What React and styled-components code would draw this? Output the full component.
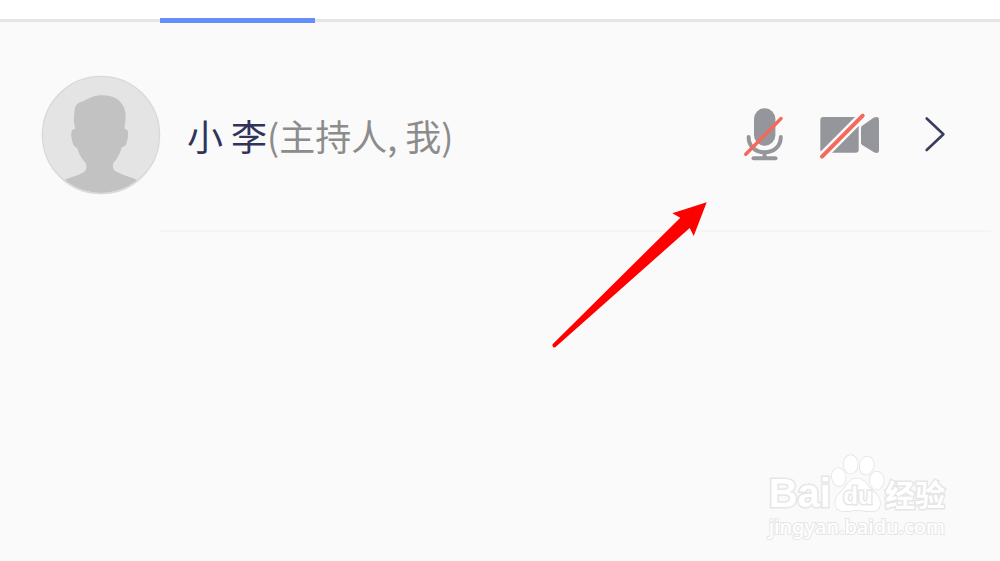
import React from 'react';
import styled, { createGlobalStyle } from 'styled-components';

const GlobalStyle = createGlobalStyle`
  * {
    box-sizing: border-box;
  }
  body {
    margin: 0;
    background: #fafafa;
    font-family: 'Noto Sans CJK SC', 'Noto Sans', sans-serif;
  }
`;

const Page = styled.main`
  position: relative;
  min-height: 100vh;
  background: #fafafa;
`;

const TabBar = styled.nav`
  display: flex;
  align-items: flex-end;
  height: 23px;
  padding-left: 16%;
  background: linear-gradient(#fff 19px, #e5e5e5 19px, #e5e5e5 22px, #fafafa 22px);
`;

const Tab = styled.button`
  width: 155px;
  height: 23px;
  padding: 0;
  border: 0;
  border-bottom: 5px solid #648efb;
  background: transparent;
`;

const MemberList = styled.ul`
  margin: 0;
  padding: 0;
  list-style: none;
`;

const MemberRow = styled.li`
  display: flex;
  align-items: center;
  padding: 52px 54px 35px 41px;
`;

const Avatar = styled.svg`
  flex: none;
  width: 120px;
  height: 120px;
`;

const Name = styled.p`
  flex: 1;
  margin: 0 0 0 26px;
  color: ${(props) => props.color};
  font-size: 36px;
  line-height: 48px;
  white-space: nowrap;
`;

const Role = styled.span`
  color: #8c8c8c;
  font-weight: 400;
`;

const Actions = styled.div`
  display: flex;
  align-items: center;
  gap: 35px;
`;

const IconButton = styled.button`
  display: flex;
  padding: 0;
  border: 0;
  margin-left: ${(props) => props.$space || 0};
  background: transparent;
  cursor: pointer;
`;

const Divider = styled.hr`
  height: 2px;
  margin: 0 9px 0 160px;
  border: 0;
  background: #f4f4f4;
`;

// 红色箭头浮在列表上方
const Arrow = styled.svg`
  position: absolute;
  top: 200px;
  right: 290px;
  pointer-events: none;
`;

const Watermark = styled.div`
  position: absolute;
  right: 55px;
  bottom: 20px;
  color: #fff;
  -webkit-text-stroke: 3px #e6e6e6;
  paint-order: stroke fill;
`;

const Brand = styled.div`
  display: flex;
  align-items: flex-end;
  height: 60px;
`;

const Latin = styled.span`
  font: bold 40px/40px 'Liberation Sans', sans-serif;
`;

const Chinese = styled.span`
  font-size: 30px;
  font-weight: 700;
  line-height: 40px;
`;

const Paw = styled.div`
  position: relative;
  width: 54px;
  height: 60px;
`;

const PawText = styled.span`
  position: absolute;
  inset: 29px 0 0;
  font: bold 24px/28px 'Liberation Sans', sans-serif;
  text-align: center;
`;

const Site = styled.div`
  font: 500 20px/28px 'Noto Sans', sans-serif;
  -webkit-text-stroke-width: 2px;
`;

const DefaultAvatar = () => (
  <Avatar viewBox="-1 -1 120 120" role="img" aria-label="头像">
    <clipPath id="avatar">
      <circle cx="59" cy="59" r="58" />
    </clipPath>
    <circle cx="59" cy="59" r="58" fill="#e4e4e4" />
    <path
      clipPath="url(#avatar)"
      fill="#c2c2c2"
      d="M33.3 53C31 46 32 40 32.5 35C33 29 36 26 41 25.5C47 22 52 19.3 61 19.3C75 19.3 83 28 83.5 38C84 44 83 49 82.3 52.7C86 53 86.5 56 86 60C85 67 84 71 80 71C78 78 75 83 71.5 86.7C70 91 71 94 75 96C82 100 90 101 97 105L97 119H20V105C28 101 36 100 42 96C45 93 45 90 43.5 86.7C39 82 37 78 35 71.7C31 71 30 65 29.3 60C29 56 29.5 53 33.3 53Z"
    />
    <circle cx="59" cy="59" r="58.5" fill="none" stroke="#d8dada" strokeWidth="1.5" />
  </Avatar>
);

const MicOff = () => (
  <svg width="40" height="56" viewBox="0 0 40 56" fill="none" strokeLinecap="round">
    <rect x="10" y="1.3" width="21.4" height="37.4" rx="10.5" fill="#95969b" />
    <path
      d="M4.6 30C4.6 39 11 45.3 20.6 45.3S36.8 39 36.8 30M20.6 45.3V51"
      stroke="#95969b"
      strokeWidth="4"
    />
    <path d="M9.5 51.3H31.5" stroke="#95969b" strokeWidth="4" />
    <path d="M1.8 47.3L37 11.5" stroke="#f4695c" strokeWidth="3.4" />
  </svg>
);

const CameraOff = () => (
  <svg width="61" height="50" viewBox="0 -4 61 50" strokeLinecap="round">
    <rect x="1.3" y="3" width="38.4" height="35.8" rx="3" fill="#95969b" />
    <path
      d="M42 14Q42 12.5 43.2 11.7L54.5 3.8Q60 1.5 60 6V36Q60 40.5 55 38.2L43.2 31Q42 30.2 42 29Z"
      fill="#95969b"
    />
    <path d="M3 42.7L43.7 1.7" stroke="#fafafa" strokeWidth="9" />
    <path d="M3 42.7L43.7 1.7" stroke="#f4695c" strokeWidth="4" />
  </svg>
);

const Chevron = () => (
  <svg width="22" height="38" viewBox="0 0 22 38" fill="none">
    <path
      d="M2.7 2.5L19.4 18.2L2.7 34"
      stroke="#383d5e"
      strokeWidth="2.6"
      strokeLinecap="round"
      strokeLinejoin="round"
    />
  </svg>
);

const BaiduPaw = () => (
  <svg width="54" height="60" viewBox="0 0 54 60" fill="#fff" stroke="#e2e2e2" strokeWidth="1.5">
    <ellipse cx="7.7" cy="24" rx="6.8" ry="9" transform="rotate(-8 7.7 24)" />
    <ellipse cx="19.7" cy="11.2" rx="7" ry="9.2" />
    <ellipse cx="35.7" cy="12.5" rx="7" ry="9" transform="rotate(12 35.7 12.5)" />
    <ellipse cx="45.7" cy="27.5" rx="7" ry="9" />
    <path d="M26 25.5C32 25.5 35 30 38 34C42 39 49 42 49 50C49 55 46 58.3 40 58.3C35 58.3 31 57 26 57C21 57 18 58.5 13 58.3C7 58 4 55 4.3 49C4.5 42 11 39 15 33C18 28 21 25.5 26 25.5Z" />
  </svg>
);

const App = () => {
  return (
    <Page>
      <GlobalStyle />
      <TabBar>
        <Tab aria-label="成员" />
      </TabBar>

      <MemberList>
        <MemberRow>
          <DefaultAvatar />
          <Name color="#30345a">
            小 李<Role>(主持人, 我)</Role>
          </Name>
          <Actions>
            <IconButton aria-label="麦克风">
              <MicOff />
            </IconButton>
            <IconButton aria-label="摄像头">
              <CameraOff />
            </IconButton>
            <IconButton aria-label="更多" $space="9px">
              <Chevron />
            </IconButton>
          </Actions>
        </MemberRow>
      </MemberList>
      <Divider />

      <Arrow width="160" height="150" viewBox="0 0 160 150" fill="#f00">
        <path d="M156.7 2.3L122.3 13.3L130.3 17.7L2.6 144.2Q1.8 147.6 5 147.6L139.7 28L143.7 36Z" />
      </Arrow>

      <Watermark>
        <Brand>
          <Latin>Bai</Latin>
          <Paw>
            <BaiduPaw />
            <PawText>du</PawText>
          </Paw>
          <Chinese>经验</Chinese>
        </Brand>
        <Site>jingyan.baidu.com</Site>
      </Watermark>
    </Page>
  );
};

export default App;
